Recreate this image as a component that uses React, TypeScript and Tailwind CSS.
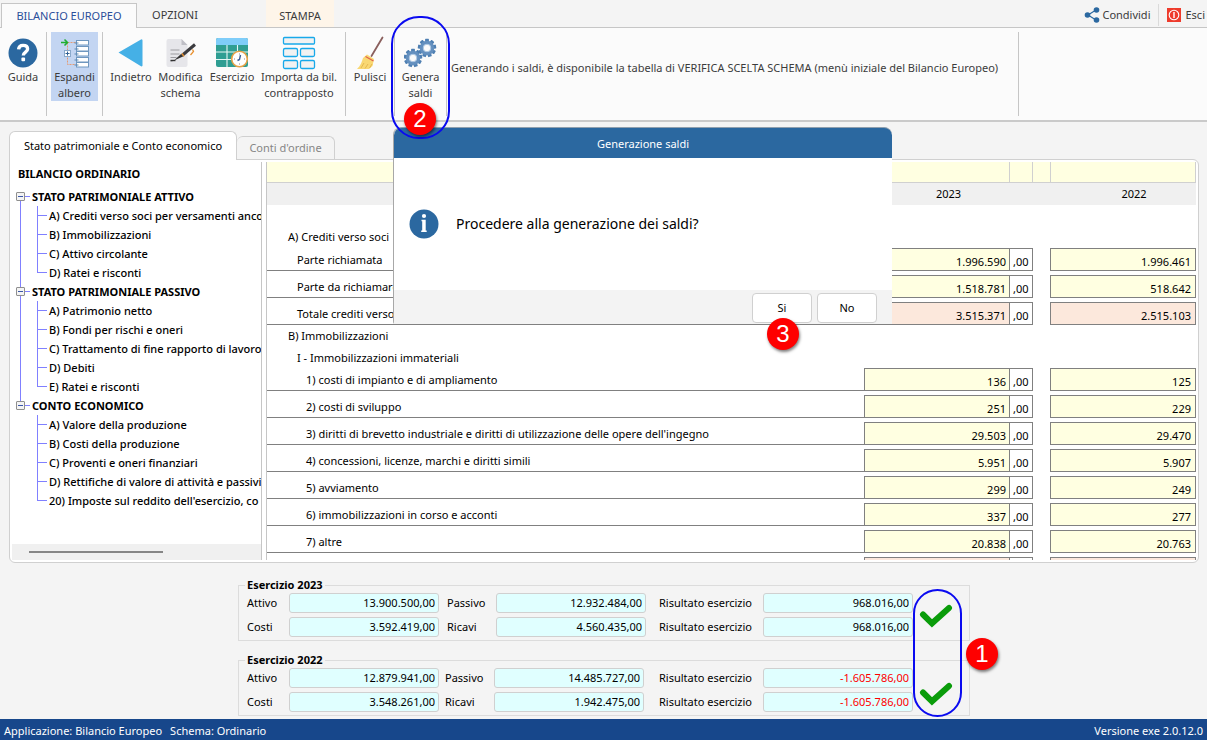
import { ReactNode, useState } from "react";
import clsx from "clsx";

interface Section {
  title: string;
  items: string[];
}

interface Row {
  kind: "blank" | "heading" | "sub" | "value" | "total";
  label?: string;
  indent?: string;
  current?: string;
  previous?: string;
  tight?: boolean;
}

interface Summary {
  year: string;
  fields: { label: string; value: string }[][];
  middle: string;
}

const SECTIONS: Section[] = [
  {
    title: "STATO PATRIMONIALE ATTIVO",
    items: [
      "A) Crediti verso soci per versamenti anco",
      "B) Immobilizzazioni",
      "C) Attivo circolante",
      "D) Ratei e risconti",
    ],
  },
  {
    title: "STATO PATRIMONIALE PASSIVO",
    items: [
      "A) Patrimonio netto",
      "B) Fondi per rischi e oneri",
      "C) Trattamento di fine rapporto di lavoro",
      "D) Debiti",
      "E) Ratei e risconti",
    ],
  },
  {
    title: "CONTO ECONOMICO",
    items: [
      "A) Valore della produzione",
      "B) Costi della produzione",
      "C) Proventi e oneri finanziari",
      "D) Rettifiche di valore di attività e passivi",
      "20) Imposte sul reddito dell'esercizio, co",
    ],
  },
];

const ROWS: Row[] = [
  { kind: "blank" },
  { kind: "heading", label: "A) Crediti verso soci", indent: "pl-[21px]" },
  { kind: "value", label: "Parte richiamata", indent: "pl-[30px]", current: "1.996.590", previous: "1.996.461", tight: true },
  { kind: "value", label: "Parte da richiamare", indent: "pl-[30px]", current: "1.518.781", previous: "518.642" },
  { kind: "total", label: "Totale crediti verso soci", indent: "pl-[30px]", current: "3.515.371", previous: "2.515.103" },
  { kind: "heading", label: "B) Immobilizzazioni", indent: "pl-[21px]" },
  { kind: "sub", label: "I - Immobilizzazioni immateriali", indent: "pl-[30px]" },
  { kind: "value", label: "1) costi di impianto e di ampliamento", indent: "pl-[39px]", current: "136", previous: "125", tight: true },
  { kind: "value", label: "2) costi di sviluppo", indent: "pl-[39px]", current: "251", previous: "229" },
  { kind: "value", label: "3) diritti di brevetto industriale e diritti di utilizzazione delle opere dell'ingegno", indent: "pl-[39px]", current: "29.503", previous: "29.470" },
  { kind: "value", label: "4) concessioni, licenze, marchi e diritti simili", indent: "pl-[39px]", current: "5.951", previous: "5.907" },
  { kind: "value", label: "5) avviamento", indent: "pl-[39px]", current: "299", previous: "249" },
  { kind: "value", label: "6) immobilizzazioni in corso e acconti", indent: "pl-[39px]", current: "337", previous: "277" },
  { kind: "value", label: "7) altre", indent: "pl-[39px]", current: "20.838", previous: "20.763" },
  { kind: "total", label: "", indent: "pl-[30px]", current: "", previous: "" },
];

const SUMMARIES: Summary[] = [
  {
    year: "2023",
    middle: "ml-2 mr-[13px]",
    fields: [
      [{ label: "Attivo", value: "13.900.500,00" }, { label: "Passivo", value: "12.932.484,00" }, { label: "Risultato esercizio", value: "968.016,00" }],
      [{ label: "Costi", value: "3.592.419,00" }, { label: "Ricavi", value: "4.560.435,00" }, { label: "Risultato esercizio", value: "968.016,00" }],
    ],
  },
  {
    year: "2022",
    middle: "ml-[6px] mr-[15px]",
    fields: [
      [{ label: "Attivo", value: "12.879.941,00" }, { label: "Passivo", value: "14.485.727,00" }, { label: "Risultato esercizio", value: "-1.605.786,00" }],
      [{ label: "Costi", value: "3.548.261,00" }, { label: "Ricavi", value: "1.942.475,00" }, { label: "Risultato esercizio", value: "-1.605.786,00" }],
    ],
  },
];

function HelpIcon() {
  return (
    <svg width="32" height="32" viewBox="0 0 32 32">
      <circle cx="16" cy="16" r="14.5" fill="#2b68a0" />
      <path d="M11.6 12.4C11.8 9.7 13.6 8.4 16.1 8.4c2.7 0 4.5 1.4 4.5 3.7 0 3.1-4.3 3-4.3 6.5" fill="none" stroke="#fff" strokeWidth="3.4" />
      <rect x="14.4" y="20.6" width="3.7" height="3.7" rx="1" fill="#fff" />
    </svg>
  );
}

function TreeIcon() {
  return (
    <svg width="32" height="32" viewBox="0 0 32 32" fill="none">
      <path d="M8.5 5.5v22h8M8.5 5.5h8" stroke="#e59a72" strokeDasharray="2 1" />
      <path d="M2 5.5h6M5.5 2.5l3 3-3 3" stroke="#1fae30" strokeWidth="1.5" />
      <rect x="5.500" y="13.500" width="6" height="6" fill="#fff" stroke="#8aa9cc" />
      <path d="M6.500 16.500h4M8.500 14.500v4" stroke="#2f5f94" />
      {[3.5, 9.5, 14.5, 20.5, 25.5].map((y) => (
        <g key={y}>
          <rect x="17.500" y={y} width="12" height="4.500" fill="#fff" stroke="#6f97bf" />
          <path d={`M15.500 ${y + 2.5}h4`} stroke="#5b87b2" />
        </g>
      ))}
    </svg>
  );
}

function BackIcon() {
  return (
    <svg width="32" height="32" viewBox="0 0 32 32">
      <path d="M3.5 15.5 26 2.5a1 1 0 0 1 1.5.9v25a1 1 0 0 1-1.5.9z" fill="#45b0e6" />
    </svg>
  );
}

function EditIcon() {
  return (
    <svg width="32" height="32" viewBox="0 0 32 32" fill="none">
      <path d="M3.5 2h13l6 6v20a2 2 0 0 1-2 2h-17a2 2 0 0 1-2-2V4a2 2 0 0 1 2-2z" fill="#e6e6ea" />
      <path d="M16.5 2v6h6z" fill="#bfbfc6" />
      <path d="M5.5 13h9M5.5 17h9M5.5 20.500h6M5.5 24h2" stroke="#9b9ba0" strokeWidth="1.200" />
      <path d="M30 7.500 17 18.500" stroke="#3b3b3f" strokeWidth="3" />
      <path d="m16 17 2 2.500L9 23.500z" fill="#333" />
      <path d="m27.500 12.500 1 2-3 3.500" stroke="#e8902e" strokeWidth="1.300" />
      <path d="m17 16.500 2 2.800" stroke="#e8902e" strokeWidth="1.400" />
      <path d="M5.500 23.500h5" stroke="#333" strokeWidth="1.400" />
    </svg>
  );
}

function CalendarIcon() {
  return (
    <svg width="34" height="32" viewBox="0 0 34 32" fill="none">
      <rect x="1" y="1" width="32" height="29" rx="2" fill="#2f9e93" />
      <path d="M1 8V3a2 2 0 0 1 2-2h28a2 2 0 0 1 2 2v5z" fill="#7fcdf9" />
      <path d="M1 15h32M1 22.5h32M12 8v22M22.5 8v22" stroke="#e8f6f4" strokeWidth="1.1" />
      <circle cx="24.5" cy="22" r="7.8" fill="#fff" stroke="#e7a146" strokeWidth="1.6" />
      <path d="M24.5 16.5v1M24.5 26.5v1M19 22h1M29 22h1" stroke="#889" />
      <path d="M25.5 18l-1 4.500-2 1" stroke="#3b5a92" strokeWidth="1.400" />
    </svg>
  );
}

function LayoutIcon() {
  return (
    <svg width="34" height="34" viewBox="0 0 34 34" fill="#f2f2f2" stroke="#18a9ea" strokeWidth="1.3">
      <rect x="1.5" y="1.5" width="31" height="6.5" rx="1" />
      <rect x="1.5" y="12.5" width="14" height="8" rx="1.5" />
      <rect x="18.5" y="12.5" width="14" height="8" rx="1.5" />
      <rect x="1.5" y="24.5" width="14" height="8" rx="1.5" />
      <rect x="18.5" y="24.5" width="14" height="8" rx="1.5" />
    </svg>
  );
}

function BroomIcon() {
  return (
    <svg width="32" height="34" viewBox="0 0 32 34" fill="none">
      <path d="M28.5 1.5 17.5 20" stroke="#8a5f5d" strokeWidth="1.8" strokeLinecap="round" />
      <path d="m13 18.5 7 4.5-1.5 7-3.5 3H3c3.5-3 5-7.5 6-11z" fill="#f9d873" />
      <path d="m10 27-3 5M14 28l-3 4.5M18 28l-2.5 4" stroke="#e5b74e" />
      <path d="m11.5 20.5 8 4.5" stroke="#e0604a" strokeWidth="1.2" />
    </svg>
  );
}

function Gear({ x, y }: { x: number; y: number }) {
  return (
    <g transform={`translate(${x} ${y})`}>
      {[0, 40, 80, 120, 160, 200, 240, 280, 320].map((a) => (
        <rect key={a} x="-1.9" y="-9.2" width="3.8" height="5" rx="0.6" fill="#4e7fb2" transform={`rotate(${a})`} />
      ))}
      <circle r="5.5" fill="#b9d0e8" stroke="#6490bf" strokeWidth="3.5" />
      <circle r="3.8" fill="#fbfbfb" stroke="#a9c4e0" />
    </g>
  );
}

function GearsIcon() {
  return (
    <svg width="34" height="32" viewBox="0 0 34 32">
      <Gear x={23} y={11} />
      <Gear x={9} y={21} />
    </svg>
  );
}

function ShareIcon() {
  return (
    <svg width="16" height="16" viewBox="0 0 16 16" fill="#2b68a0">
      <path d="M12 3 4 8l8 5" fill="none" stroke="#2b68a0" strokeWidth="1.2" />
      <circle cx="3.5" cy="8" r="2.8" />
      <circle cx="12.5" cy="3" r="2.8" />
      <circle cx="12.5" cy="13" r="2.8" />
    </svg>
  );
}

function ExitIcon() {
  return (
    <svg width="14" height="14" viewBox="0 0 14 14" fill="none">
      <rect width="14" height="14" fill="#ee3b2c" />
      <circle cx="7" cy="7" r="4.8" stroke="#fff" strokeWidth="1.1" />
      <path d="M7 4v6" stroke="#fff" strokeWidth="1.4" />
    </svg>
  );
}

function InfoIcon() {
  return (
    <svg width="30" height="30" viewBox="0 0 30 30" fill="#fff">
      <circle cx="15" cy="15" r="14.5" fill="#2b68a0" />
      <circle cx="15" cy="7" r="2.1" />
      <path d="M12.5 10.8h4.2v10.700h1V23h-5.500v-1.500h1v-9.200h-.7z" />
    </svg>
  );
}

function CheckIcon() {
  return (
    <svg width="34" height="26" viewBox="0 0 34 26" fill="none">
      <path d="m4 11.5 9 8.800L30 5" stroke="#0a9c0a" strokeWidth="6" strokeLinecap="round" />
    </svg>
  );
}

function RibbonButton({ icon, children, className, active }: { icon: ReactNode; children: ReactNode; className: string; active?: boolean }) {
  return (
    <button className={clsx("flex h-[69px] shrink-0 flex-col items-center whitespace-nowrap text-center leading-4", active && "bg-[#c3d5f2]", className)}>
      <span className="flex h-[37px] items-center justify-center pt-1">{icon}</span>
      <span>{children}</span>
    </button>
  );
}

function Separator() {
  return <div className="h-[84px] w-px shrink-0 bg-[#c6c6c6]" />;
}

function Badge({ n, className }: { n: number; className: string }) {
  return (
    <span className={clsx("absolute z-30 flex size-8 items-center justify-center rounded-full bg-[#fe0000] font-['Liberation_Sans',sans-serif] text-[24px] text-white shadow-[1px_2px_3px_rgba(0,0,0,0.5)]", className)}>
      {n}
    </span>
  );
}

function TreeSection({ section, first, last }: { section: Section; first: boolean; last: boolean }) {
  const [open, setOpen] = useState<boolean>(true);
  return (
    <li className="flex">
      <div className="flex w-[9px] shrink-0 flex-col items-center">
        <span className={clsx("h-[5px] w-px", !first && "bg-[#8080ff]")} />
        <button
          onClick={() => setOpen(!open)}
          aria-label={section.title}
          className="flex size-[9px] shrink-0 items-center justify-center rounded-[1px] border border-[#8f8f8f] bg-[#f4f4f4]"
        >
          <span className="h-px w-[5px] bg-[#3c58a8]" />
        </button>
        <span className={clsx("w-px flex-1", !last && "bg-[#8080ff]")} />
      </div>
      <div>
        <div className="flex h-[19px] items-center font-bold">
          <span className="mr-[2px] h-px w-[5px] bg-[#8080ff]" />
          {section.title}
        </div>
        {open && (
          <ul className="pl-3 font-medium">
            {section.items.map((item, i) => (
              <li key={item} className="flex h-[19px] items-center">
                <span className="mr-[2px] flex w-[10px] flex-col self-stretch">
                  <span className="h-[10px] border-b border-l border-[#8080ff]" />
                  <span className={clsx("flex-1", i < section.items.length - 1 && "border-l border-[#8080ff]")} />
                </span>
                {item}
              </li>
            ))}
          </ul>
        )}
      </div>
    </li>
  );
}

function DataRow({ row }: { row: Row }) {
  if (row.kind === "blank" || row.kind === "heading" || row.kind === "sub") {
    return (
      <tr className={row.kind === "heading" ? "h-[22px]" : "h-[21px]"}>
        <td colSpan={5} className={row.indent}>{row.label}</td>
      </tr>
    );
  }
  const fill = row.kind === "total" ? "bg-[#fce8dc]" : "bg-[#ffffe1]";
  return (
    <tr className={clsx("align-bottom", row.tight ? "h-[23px]" : "h-[27px]")}>
      <td className={clsx("border-b border-[#808080]", row.indent)}>
        <div className="h-[18px]">{row.label}</div>
      </td>
      <td>
        <div className={clsx("h-[23px] border-y border-l border-[#808080] pt-[5px] pr-[3px] text-right", fill)}>{row.current}</div>
      </td>
      <td>
        <div className="h-[23px] border border-[#808080] pt-[5px] pl-[3px]">{row.current && ",00"}</div>
      </td>
      <td></td>
      <td>
        <div className={clsx("h-[23px] border border-[#808080] pt-[5px] pr-1 text-right", fill)}>{row.previous}</div>
      </td>
    </tr>
  );
}

function SummaryBox({ summary }: { summary: Summary }) {
  return (
    <fieldset className="relative h-[56px] border border-[#dcdcdc] pl-2">
      <legend className="absolute -top-[9px] left-[6px] bg-[#f4f4f4] px-[2px] font-bold leading-4">Esercizio {summary.year}</legend>
      <div className="flex flex-col gap-1 pt-[7px]">
        {summary.fields.map((line, r) => (
          <div key={r} className="flex items-center">
            {line.map((field, c) => {
              const id = `f${summary.year}-${r}-${c}`;
              return (
                <div key={id} className={clsx("flex items-center", c === 1 && summary.middle)}>
                  <label htmlFor={id} className={clsx("whitespace-nowrap", c === 0 && "w-[42px]", c === 1 && "w-[49px]", c === 2 && "w-[104px]")}>
                    {field.label}
                  </label>
                  <input
                    id={id}
                    readOnly
                    value={field.value}
                    className={clsx("h-5 w-[150px] rounded-[3px] border border-[#d0d0d0] bg-[#e0ffff] pr-[3px] pb-[2px] text-right", field.value.startsWith("-") && "text-[#ff0000]")}
                  />
                </div>
              );
            })}
          </div>
        ))}
      </div>
    </fieldset>
  );
}

function Dialog() {
  return (
    <div role="dialog" aria-label="Generazione saldi" className="absolute top-[127px] left-[393px] z-10 w-[499px] rounded-t-lg rounded-b-[4px] border-l border-[#a8a8a8] bg-white">
      <div className="flex h-[31px] items-center justify-center rounded-t-lg border-t border-[#8f9fae] bg-[#2b68a0] pt-[2px] text-white">Generazione saldi</div>
      <div className="flex h-[132px] items-center gap-[17px] pl-[15px]">
        <InfoIcon />
        <p className="text-[14px]">Procedere alla generazione dei saldi?</p>
      </div>
      <div className="flex h-[35px] items-start justify-end gap-[5px] border-b border-[#808080] bg-[#f3f3f3] pt-[3px] pr-[15px]">
        <button className="relative h-[30px] w-[60px] rounded border border-[#d0d0d0] bg-white">
          Si
          <Badge n={3} className="top-[24px] left-[14px]" />
        </button>
        <button className="h-[30px] w-[60px] rounded border border-[#d0d0d0] bg-white">No</button>
      </div>
    </div>
  );
}

export default function App() {
  return (
    <div className="relative flex h-screen flex-col overflow-hidden bg-[#f4f4f4] font-['Noto_Sans','Open_Sans',sans-serif] text-[11px] leading-4 text-black">
      <nav className="flex h-[28px] shrink-0 items-end border-b border-[#c6c6c6] text-[#3b3b3b]">
        <button className="-mb-px ml-px h-[25px] w-[136px] border border-b-0 border-[#c6c6c6] bg-[#fbfbfb] text-[#2b4f9a]">BILANCIO EUROPEO</button>
        <button className="h-[25px] w-[76px] pt-px">OPZIONI</button>
        <button className="ml-[53px] h-full w-[68px] bg-[#fef5e9] pt-1">STAMPA</button>
        <div className="ml-auto flex h-[25px] items-center">
          <button className="flex items-center gap-[2px] pr-2">
            <ShareIcon />
            Condividi
          </button>
          <span className="h-[22px] w-px bg-[#dadada]" />
          <button className="flex items-center gap-1 pr-[2px] pl-2">
            <ExitIcon />
            Esci
          </button>
        </div>
      </nav>

      <header className="flex h-[94px] shrink-0 items-start border-b-2 border-[#cacaca] bg-[#fbfbfb] pt-1 text-[#3b3b3b]">
        <RibbonButton className="w-[46px]" icon={<HelpIcon />}>Guida</RibbonButton>
        <Separator />
        <RibbonButton active className="mr-1 ml-1 w-[47px]" icon={<TreeIcon />}>Espandi<br />albero</RibbonButton>
        <Separator />
        <RibbonButton className="ml-1 w-[48px]" icon={<BackIcon />}>Indietro</RibbonButton>
        <RibbonButton className="w-[51px]" icon={<EditIcon />}>Modifica<br />schema</RibbonButton>
        <RibbonButton className="w-[52px]" icon={<CalendarIcon />}>Esercizio</RibbonButton>
        <RibbonButton className="mr-[5px] w-[82px]" icon={<LayoutIcon />}>Importa da bil.<br />contrapposto</RibbonButton>
        <Separator />
        <RibbonButton className="w-[48px]" icon={<BroomIcon />}>Pulisci</RibbonButton>
        <Separator />
        <div className="relative">
          <RibbonButton className="w-[51px]" icon={<GearsIcon />}>Genera<br />saldi</RibbonButton>
          <span className="pointer-events-none absolute -top-4 -left-1 z-20 h-[123px] w-[59px] rounded-[28px] border-2 border-[#0a0af0]" />
          <Badge n={2} className="top-[71px] left-[9px]" />
        </div>
        <Separator />
        <p className="w-[571px] shrink-0 self-center whitespace-nowrap pb-4 pl-1">
          Generando i saldi, è disponibile la tabella di VERIFICA SCELTA SCHEMA (menù iniziale del Bilancio Europeo)
        </p>
        <Separator />
      </header>

      <main className="flex min-h-0 flex-1 flex-col pt-[9px] pr-2 pl-[9px]">
        <div role="tablist" className="flex shrink-0 items-end">
          <button role="tab" className="relative -mb-px h-[29px] w-[228px] rounded-t-md border border-b-0 border-[#d0d0d0] bg-white">Stato patrimoniale e Conto economico</button>
          <button role="tab" className="h-[23px] w-[98px] rounded-t-md border border-b-0 border-l-0 border-[#d0d0d0] text-[#868686]">Conti d'ordine</button>
        </div>
        <section className="flex min-h-0 flex-1 rounded-b-md rounded-tr-md border border-[#d0d0d0] bg-white p-[2px]">
          <aside className="flex w-[250px] shrink-0 flex-col overflow-hidden border-r border-[#c6c6c6]">
            <div className="min-h-0 flex-1 overflow-hidden whitespace-nowrap pt-1 pl-1">
              <h1 className="mb-[5px] pl-[2px] font-bold">BILANCIO ORDINARIO</h1>
              <ul>
                {SECTIONS.map((section, i) => (
                  <TreeSection key={section.title} section={section} first={i === 0} last={i === SECTIONS.length - 1} />
                ))}
              </ul>
            </div>
            <div className="flex h-4 shrink-0 items-center bg-[#f0f0f0] pl-[17px]">
              <div className="h-[2px] w-[134px] bg-[#868686]" />
            </div>
          </aside>
          <div className="ml-1 min-w-0 flex-1 overflow-hidden border-l border-[#c6c6c6]">
            <table className="w-full table-fixed border-separate border-spacing-0 whitespace-nowrap">
              <colgroup>
                <col />
                <col className="w-[145px]" />
                <col className="w-[24px]" />
                <col className="w-[17px]" />
                <col className="w-[146px]" />
              </colgroup>
              <thead>
                <tr className="h-[21px] bg-[#ffffe1]">
                  <td className="border-b border-[#d0d0d0]"></td>
                  <td className="border-b border-[#d0d0d0]"></td>
                  <td className="border-x border-b border-[#d0d0d0]"></td>
                  <td className="border-b border-[#d0d0d0]"></td>
                  <td className="border-x border-b border-[#d0d0d0]"></td>
                </tr>
                <tr className="h-[22px] bg-[#f0f0f0]">
                  <th></th>
                  <th colSpan={2} className="font-normal">2023</th>
                  <th></th>
                  <th className="pl-[22px] font-normal">2022</th>
                </tr>
              </thead>
              <tbody>
                {ROWS.map((row, i) => (
                  <DataRow key={i} row={row} />
                ))}
              </tbody>
            </table>
          </div>
        </section>
        <div className="relative mx-auto mt-[22px] mb-[3px] flex w-[732px] shrink-0 flex-col gap-[19px]">
          {SUMMARIES.map((summary) => (
            <SummaryBox key={summary.year} summary={summary} />
          ))}
          <div className="absolute top-1 right-2 flex h-[128px] w-[49px] flex-col items-center gap-[52px] rounded-[25px] border-2 border-[#0a0af0] pt-3 pr-1">
            <CheckIcon />
            <CheckIcon />
          </div>
          <Badge n={1} className="top-[53px] -right-7" />
        </div>
      </main>

      <footer className="flex h-[21px] shrink-0 items-center gap-2 bg-[#17478b] px-1 pt-[2px] text-white">
        <span>Applicazione: Bilancio Europeo</span>
        <span>Schema: Ordinario</span>
        <span className="ml-auto">Versione exe 2.0.12.0</span>
      </footer>

      <Dialog />
    </div>
  );
}
